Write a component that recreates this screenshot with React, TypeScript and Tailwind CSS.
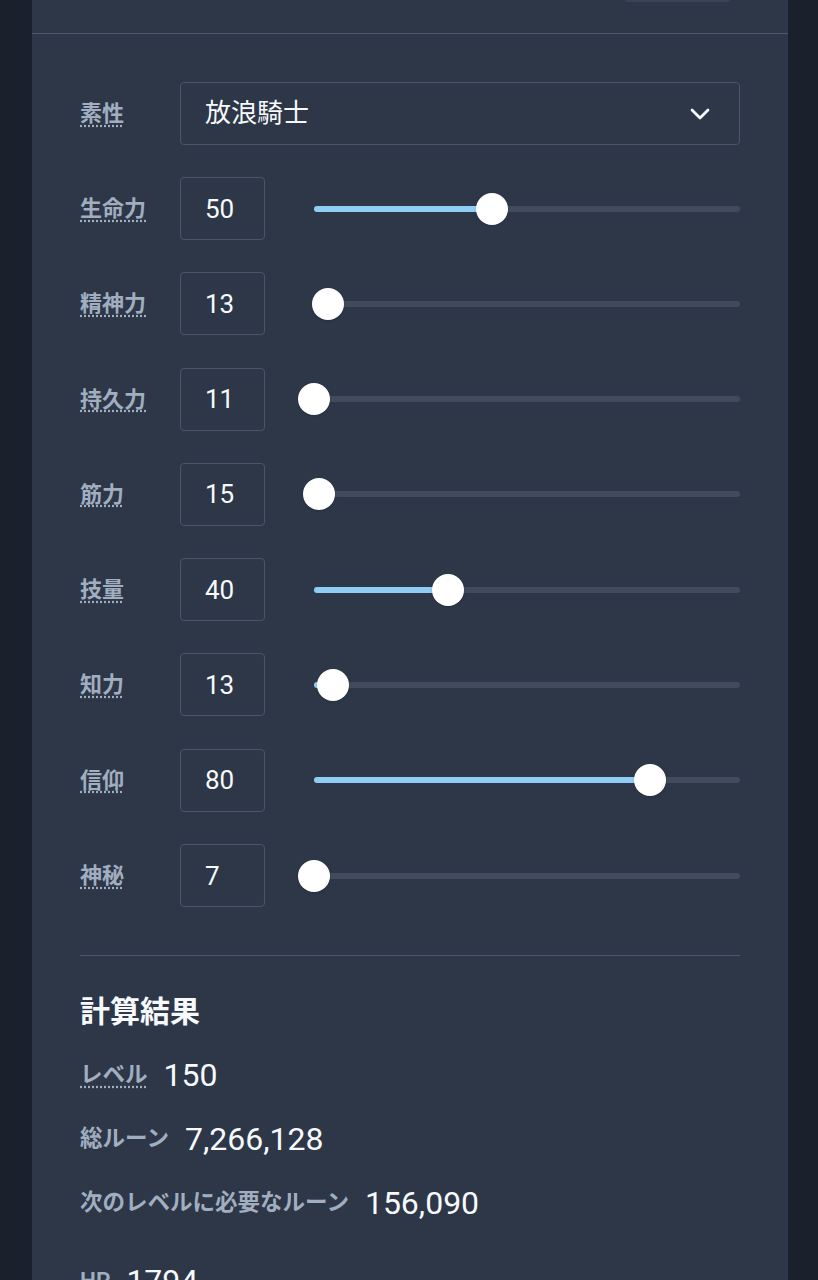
const font = { fontFamily: "Roboto, 'Noto Sans CJK JP', sans-serif" };

type Stat = { label: string; value: number; min: number };

const stats: Stat[] = [
  { label: "生命力", value: 50, min: 15 },
  { label: "精神力", value: 13, min: 10 },
  { label: "持久力", value: 11, min: 11 },
  { label: "筋力", value: 15, min: 14 },
  { label: "技量", value: 40, min: 13 },
  { label: "知力", value: 13, min: 9 },
  { label: "信仰", value: 80, min: 9 },
  { label: "神秘", value: 7, min: 7 },
];

function StatRow({ stat }: { stat: Stat }) {
  const pct = ((stat.value - stat.min) / (99 - stat.min)) * 100;
  return (
    <div className="flex items-center">
      <span className="w-[100px] shrink-0 text-[22px] font-semibold text-[#a0aec0] underline decoration-dotted decoration-[#a0aec0] underline-offset-[4px]">
        {stat.label}
      </span>
      <input
        readOnly
        value={stat.value}
        className="w-[85px] h-[63px] shrink-0 rounded border border-[#4a5568] bg-transparent px-[24px] text-[26px] text-[#f7fafc] outline-none"
        style={font}
      />
      {/* slider */}
      <div className="relative ml-[49px] flex h-8 flex-1 items-center">
        <div className="h-[6px] w-full rounded-full bg-[#414b5d]" />
        <div
          className="absolute left-0 h-[6px] rounded-full bg-[#90cdf4]"
          style={{ width: `${pct}%` }}
        />
        <div
          className="absolute h-8 w-8 -translate-x-1/2 rounded-full bg-white shadow"
          style={{ left: `${pct}%` }}
        />
      </div>
    </div>
  );
}

export default function App() {
  return (
    <div className="min-h-screen bg-[#1a202c]" style={font}>
      <div className="ml-8 mr-[30px] bg-[#2d3748]">
        {/* top bar, mostly scrolled away */}
        <div className="flex h-[34px] justify-end border-b border-[#4f5a6c]">
          <div className="mr-[58px] h-[2px] w-[105px] rounded-b bg-[#3a4456]" />
        </div>

        <div className="px-12 pt-12 pb-10">
          {/* class select */}
          <div className="flex items-center">
            <span className="w-[100px] shrink-0 text-[22px] font-semibold text-[#a0aec0] underline decoration-dotted decoration-[#a0aec0] underline-offset-[4px]">
              素性
            </span>
            <div className="flex h-[63px] flex-1 items-center justify-between rounded border border-[#4a5568] pl-6 pr-[29px]">
              <span className="text-[26px] text-[#f7fafc]">放浪騎士</span>
              <svg width="20" height="12" viewBox="0 0 20 12" fill="none">
                <path d="M2 2l8 8 8-8" stroke="#f7fafc" strokeWidth="2.8" strokeLinecap="round" strokeLinejoin="round" />
              </svg>
            </div>
          </div>

          <div className="mt-8 flex flex-col gap-[32.3px]">
            {stats.map((s) => (
              <StatRow key={s.label} stat={s} />
            ))}
          </div>

          <div className="mt-12 border-t border-[#4a5568]" />

          {/* results */}
          <h2 className="pt-[35px] text-[30px] font-bold leading-[42px] text-[#f7fafc]">計算結果</h2>
          <div className="mt-[22px] flex flex-col gap-6">
            <div className="flex h-10 items-center gap-4">
              <span className="text-[22.5px] font-semibold text-[#a0aec0] underline decoration-dotted underline-offset-[4px]">
                レベル
              </span>
              <span className="text-[32px] text-[#f7fafc]">150</span>
            </div>
            <div className="flex h-10 items-center gap-4">
              <span className="text-[22.5px] font-semibold text-[#a0aec0]">総ルーン</span>
              <span className="text-[32px] text-[#f7fafc]">7,266,128</span>
            </div>
            <div className="flex h-10 items-center gap-4">
              <span className="text-[22.5px] font-semibold text-[#a0aec0]">次のレベルに必要なルーン</span>
              <span className="text-[32px] text-[#f7fafc]">156,090</span>
            </div>
            <div className="mt-[14px] flex h-10 items-center gap-4">
              <span className="text-[22.5px] font-semibold text-[#a0aec0] underline decoration-dotted underline-offset-[4px]">
                HP
              </span>
              <span className="text-[32px] text-[#f7fafc]">1794</span>
            </div>
          </div>
        </div>
      </div>
    </div>
  );
}
